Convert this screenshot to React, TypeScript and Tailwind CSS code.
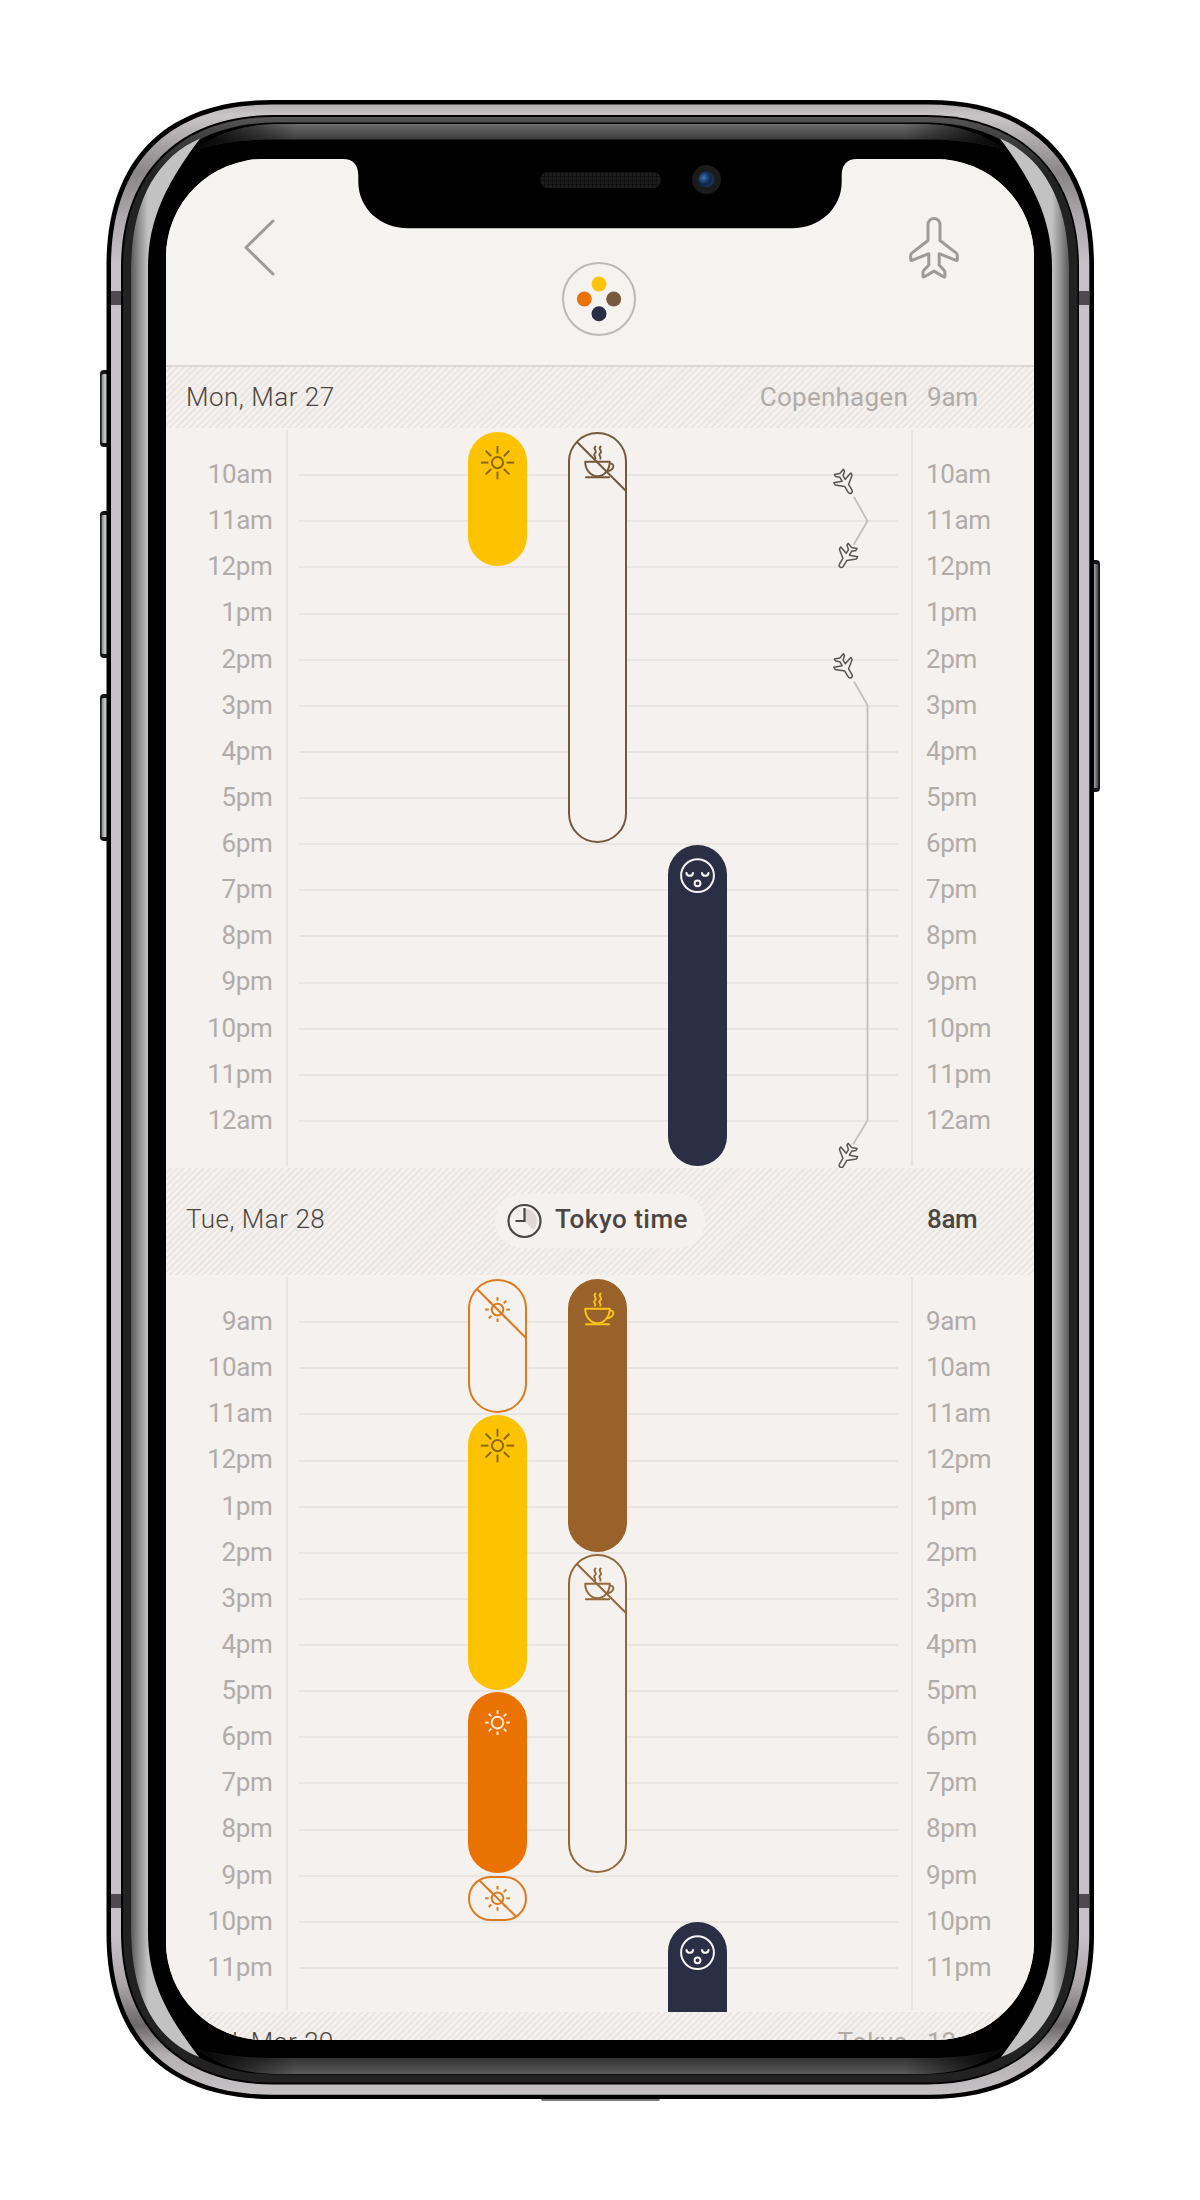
import React from "react";

const PLANE =
  "M-6 7 A6 6 0 0 1 6 7 V23 L22.3 35.6 Q23.3 36.4 23.3 38 V42 Q23.3 43.4 22 42.8 L5.2 36.2 V47.5 L9.6 52.2 Q11 53.5 11 56 V58.3 Q11 60 9.6 59.2 L0 53.6 L-9.6 59.2 Q-11 60 -11 58.3 V56 Q-11 53.5 -9.6 52.2 L-5.2 47.5 V36.2 L-22 42.8 Q-23.3 43.4 -23.3 42 V38 Q-23.3 36.4 -22.3 35.6 L-6 23 Z";

const SMALL_PLANE =
  "M-2.2 -9.6 Q-2.2 -12.4 0 -12.4 Q2.2 -12.4 2.2 -9.6 V-3.4 L9.8 2.8 V5.4 L1.8 2.6 V7 L5.2 10 V12.2 L0 10.4 L-5.2 12.2 V10 L-1.8 7 V2.6 L-9.8 5.4 V2.8 L-2.2 -3.4 Z";

function squircle(l: number, t: number, r: number, b: number, R: number, c: number) {
  const k = R * (1 - c);
  return `M${l} ${t + R}C${l} ${t + k} ${l + k} ${t} ${l + R} ${t}H${r - R}C${r - k} ${t} ${r} ${t + k} ${r} ${t + R}V${b - R}C${r} ${b - k} ${r - k} ${b} ${r - R} ${b}H${l + R}C${l + k} ${b} ${l} ${b - k} ${l} ${b - R}Z`;
}

function SideButton({ x, y, h }: { x: number; y: number; h: number }) {
  return (
    <g>
      <rect x={x} y={y} width="14" height={h} rx="4" fill="#151617" />
      <rect x={x + 1.5} y={y + 4} width="11" height={h - 8} rx="1.5" fill="url(#btn)" />
    </g>
  );
}

function DeviceFrame() {
  const side =
    "M131 270C131 205 155 158 200 138.5C166 184 148 220 148 268V1932C148 1980 166 2014 199 2057C155 2040 131 1995 131 1928Z";
  const topGloss =
    "M193 150C222 132 245 124 280 124H920C955 124 978 132 1007 150C978 142 955 139.5 925 139.5H275C245 139.5 222 142 193 150Z";
  const bottomGloss =
    "M199 2050C225 2056 245 2058 275 2058H925C955 2058 975 2056 1001 2050C978 2068 950 2074 920 2074H280C250 2074 222 2068 199 2050Z";
  return (
    <svg className="absolute left-0 top-0" width="1200" height="2200" viewBox="0 0 1200 2200" fill="none">
      <defs>
        <linearGradient id="btn" x1="0" x2="1" y1="0" y2="0">
          <stop offset="0" stopColor="#77797a" />
          <stop offset=".3" stopColor="#c9cbcb" />
          <stop offset=".6" stopColor="#a5a6a7" />
          <stop offset="1" stopColor="#3a3a3b" />
        </linearGradient>
        <linearGradient id="steel" x1="0" x2="0" y1="104" y2="2095" gradientUnits="userSpaceOnUse">
          <stop offset="0" stopColor="#b5b0b2" />
          <stop offset=".006" stopColor="#cac6c8" />
          <stop offset=".02" stopColor="#a9a5a7" />
          <stop offset=".035" stopColor="#8a8687" />
          <stop offset=".055" stopColor="#aaa6a9" />
          <stop offset=".08" stopColor="#c6c1c8" />
          <stop offset=".92" stopColor="#c6c1c8" />
          <stop offset=".945" stopColor="#aaa4a6" />
          <stop offset=".965" stopColor="#6c6869" />
          <stop offset=".98" stopColor="#b5b1b2" />
          <stop offset="1" stopColor="#c6c2c5" />
        </linearGradient>
        <linearGradient id="rim" x1="0" x2="0" y1="117" y2="175" gradientUnits="userSpaceOnUse">
          <stop offset="0" stopColor="#565656" />
          <stop offset=".25" stopColor="#454545" />
          <stop offset="1" stopColor="#222222" />
        </linearGradient>
        <linearGradient id="sideL" x1="131" x2="148" y1="0" y2="0" gradientUnits="userSpaceOnUse">
          <stop offset="0" stopColor="#5a5a5a" />
          <stop offset=".5" stopColor="#929292" />
          <stop offset="1" stopColor="#c2c2c2" />
        </linearGradient>
        <linearGradient id="topGloss" x1="0" x2="0" y1="124" y2="140" gradientUnits="userSpaceOnUse">
          <stop offset="0" stopColor="#6c6c6c" />
          <stop offset="1" stopColor="#3a3a3a" />
        </linearGradient>
        <linearGradient id="bottomGloss" x1="0" x2="0" y1="2058" y2="2074" gradientUnits="userSpaceOnUse">
          <stop offset="0" stopColor="#343434" />
          <stop offset="1" stopColor="#5a5a5a" />
        </linearGradient>
        <linearGradient id="fade" x1="190" x2="1010" y1="0" y2="0" gradientUnits="userSpaceOnUse">
          <stop offset="0" stopColor="#000" />
          <stop offset=".13" stopColor="#000" stopOpacity="0" />
          <stop offset=".87" stopColor="#000" stopOpacity="0" />
          <stop offset="1" stopColor="#000" />
        </linearGradient>
      </defs>
      <SideButton x={100} y={370} h={77} />
      <SideButton x={100} y={511} h={147} />
      <SideButton x={100} y={694} h={147} />
      <SideButton x={1086} y={560} h={232} />
      <rect x="541" y="2096" width="119" height="5" rx="2" fill="#77797a" />
      <path d={squircle(106.5, 100, 1094, 2099, 165, 0.64)} fill="#000" />
      <path d={squircle(111, 104.5, 1089.3, 2094.7, 161, 0.64)} fill="url(#steel)" />
      <g fill="#4f4a4d">
        <rect x="111" y="291" width="11" height="14" />
        <rect x="1079" y="291" width="10.3" height="14" />
        <rect x="111" y="1894" width="11" height="14" />
        <rect x="1079" y="1894" width="10.3" height="14" />
      </g>
      <path d={squircle(121, 115, 1079, 2084.5, 152, 0.62)} fill="#000" />
      <path d={squircle(123, 117, 1077.5, 2082.5, 150, 0.62)} fill="url(#rim)" />
      <path d={squircle(131, 122.5, 1069, 2074.5, 145, 0.62)} fill="#000" />
      <path d={topGloss} fill="url(#topGloss)" />
      <path d={bottomGloss} fill="url(#bottomGloss)" />
      <path d={topGloss} fill="url(#fade)" />
      <path d={bottomGloss} fill="url(#fade)" />
      <path d={side} fill="url(#sideL)" />
      <path d={side} fill="url(#sideL)" transform="matrix(-1 0 0 1 1200 0)" />
    </svg>
  );
}

function Notch() {
  return (
    <svg className="absolute left-[177px] top-[-1px]" width="514" height="71" viewBox="343 158 514 71">
      <defs>
        <pattern id="mesh" width="4" height="4" patternUnits="userSpaceOnUse">
          <rect width="4" height="4" fill="#1d1b1c" />
          <path d="M0 0H4M0 0V4" stroke="#0d0c0d" strokeWidth="1.4" />
        </pattern>
        <radialGradient id="lens" cx=".35" cy=".4" r=".7">
          <stop offset="0" stopColor="#3f75b5" />
          <stop offset=".3" stopColor="#214a80" />
          <stop offset=".6" stopColor="#12264a" />
          <stop offset="1" stopColor="#1c3a66" />
        </radialGradient>
      </defs>
      <path d="M343 158V159C353.500 159 358.300 165 358.300 176V182C358.300 208 380 228.300 408 228.300H792C820 228.300 841.700 208 841.700 182V176C841.700 165 846.500 159 857 159V158Z" fill="#000" />
      <rect x="540" y="172" width="121" height="16" rx="8" fill="url(#mesh)" />
      <circle cx="706.500" cy="179.500" r="14.500" fill="#1b1b1c" />
      <circle cx="706.300" cy="179.300" r="8" fill="url(#lens)" />
    </svg>
  );
}

function Sun({ big }: { big?: boolean }) {
  const [a, b] = big ? [9, 16.7] : [8.8, 12.4];
  return (
    <g strokeWidth="2">
      <circle r={big ? 5.6 : 5.8} />
      {[0, 45, 90, 135, 180, 225, 270, 315].map((d) => (
        <path key={d} d={`M0 ${-a}V${-b}`} transform={`rotate(${d})`} />
      ))}
    </g>
  );
}

function Cup() {
  return (
    <g strokeWidth="1.9" strokeLinejoin="round" strokeLinecap="round">
      <path d="M-12.300 -.8H12.300C12.300 7 7 13.500 0 13.500S-12.300 7 -12.300 -.8Z" />
      <path d="M-11.600 14.600H11.600" />
      <path d="M12.300 1H13.500C17.500 1.500 16.500 8 9.500 8.500" />
      <path d="M-2 -16C-5.500 -13.500 .4 -12 -2.400 -9.500S-.8 -6 -2.400 -3.800" />
      <path d="M3.200 -16C-.3 -13.500 5.600 -12 2.800 -9.500S4.400 -6 2.800 -3.800" />
    </g>
  );
}

function Face() {
  return (
    <g strokeWidth="2" strokeLinecap="round">
      <circle r="16.400" />
      <path d="M-11 -2.600C-10.500 1.200 -5 1.200 -4.500 -2.600M4.500 -2.600C5 1.200 10.500 1.200 11 -2.600" />
      <circle cy="7.700" r="2.900" />
    </g>
  );
}

type Bar = {
  place: string;
  icon: "sun" | "sunSmall" | "cup" | "face";
  stroke: string;
  cy?: number;
  slash?: string;
};

const SLASH = "M9 10L57.500 58.500";

const mondayBars: Bar[] = [
  { place: "left-[180px] top-[4px] h-[134px] bg-[#fdc300] rounded-full", icon: "sun", stroke: "#8a6a10" },
  { place: "left-[280px] top-[4px] h-[411px] bg-[#f5f1ee] border-2 border-[#75583b] rounded-full", icon: "cup", stroke: "#75583b", slash: SLASH },
  { place: "left-[380px] top-[417px] h-[320.500px] bg-[#2a2f45] rounded-full", icon: "face", stroke: "#f8f4f4" },
];

const tuesdayBars: Bar[] = [
  { place: "left-[180px] top-[4px] h-[134px] bg-[#f5f1ee] border-2 border-[#dd7a1e] rounded-full", icon: "sunSmall", stroke: "#dd7a1e", slash: SLASH },
  { place: "left-[180px] top-[140px] h-[275px] bg-[#fdc300] rounded-full", icon: "sun", stroke: "#8a6a10" },
  { place: "left-[180px] top-[417px] h-[181px] bg-[#ea7200] rounded-full", icon: "sunSmall", stroke: "#fbe9d6" },
  { place: "left-[180px] top-[601px] h-[44.500px] bg-[#f5f1ee] border-2 border-[#dd7a1e] rounded-full", icon: "sunSmall", stroke: "#dd7a1e", cy: 22.3, slash: "M11 4L48 40.500" },
  { place: "left-[280px] top-[4px] h-[272.500px] bg-[#98622a] rounded-full", icon: "cup", stroke: "#fcc419" },
  { place: "left-[280px] top-[278.500px] h-[319px] bg-[#f5f1ee] border-2 border-[#91683a] rounded-full", icon: "cup", stroke: "#91683a", slash: SLASH },
  { place: "left-[380px] top-[647px] h-[90px] bg-[#2a2f45] rounded-t-full", icon: "face", stroke: "#f8f4f4" },
];

function BarView({ bar }: { bar: Bar }) {
  const bordered = bar.place.includes("border-2");
  return (
    <div className={"absolute w-[59px] " + bar.place}>
      <svg
        className={bordered ? "absolute -left-0.5 -top-0.5" : "absolute left-0 top-0"}
        width="59"
        height="62"
        viewBox="0 0 59 62"
        fill="none"
        stroke={bar.stroke}
      >
        <g transform={`translate(29.500 ${bar.cy ?? 30.6})`}>
          {bar.icon === "cup" ? <Cup /> : bar.icon === "face" ? <Face /> : <Sun big={bar.icon === "sun"} />}
        </g>
        {bar.slash && <path d={bar.slash} strokeWidth="2" />}
      </svg>
    </div>
  );
}

function HourLabels({ hours, right }: { hours: string[]; right?: boolean }) {
  return (
    <div
      className={
        right
          ? "w-[120px] shrink-0 pl-[13px] pt-[23px] tracking-[-.35px]"
          : "w-[120px] shrink-0 pr-[13.500px] pt-[23px] text-right tracking-[-.35px]"
      }
    >
      {hours.map((h, i) => (
        <div key={i} className="h-[46.125px] whitespace-nowrap leading-[46px] text-[#b1acaa]">
          {h}
        </div>
      ))}
    </div>
  );
}

function DaySection({ hours, bars, className, children }: { hours: string[]; bars: Bar[]; className: string; children?: React.ReactNode }) {
  return (
    <div className={"relative flex shrink-0 overflow-hidden bg-[#f5f1ee] " + className}>
      <HourLabels hours={hours} />
      <div className="relative my-0.5 w-[627px] shrink-0 border-x-2 border-[#e9e4e1]">
        <div className="ml-[11px] mr-[13px]">
          {hours.map((_, i) => (
            <div key={i} className="h-[46.125px] border-b-2 border-[#eae5e2]" />
          ))}
        </div>
        <div className="absolute -inset-y-0.5 left-0 right-0">
          {bars.map((b, i) => (
            <BarView key={i} bar={b} />
          ))}
          {children}
        </div>
      </div>
      <HourLabels hours={hours} right />
    </div>
  );
}

/* Flight legs, drawn in the coordinates of the first day's grid. */
function Flights() {
  const planes: [number, number, number][] = [
    [557, 54.5, 150],
    [558.5, 128.5, 210],
    [557, 239, 150],
    [558.5, 728.5, 210],
  ];
  return (
    <svg className="absolute left-0 top-0" width="620" height="740" viewBox="0 0 620 740" fill="none">
      <g stroke="#c4bfbc" strokeWidth="1.8">
        <path d="M566 69L579.500 93L565.500 117" />
        <path d="M566 253.500L579.500 277V692.500L565 716.500" />
      </g>
      {planes.map(([x, y, a], i) => (
        <path key={i} d={SMALL_PLANE} transform={`translate(${x} ${y}) rotate(${a})`} fill="#f5f1ee" stroke="#5a5552" strokeWidth="1.5" strokeLinejoin="round" />
      ))}
    </svg>
  );
}

const HATCH =
  "bg-[repeating-linear-gradient(135deg,#f5f1ee_0px,#f5f1ee_2.300px,#eae5e2_2.800px,#eae5e2_4.200px,#f5f1ee_4.670px)]";

function Band({ date, city, time, strong, className, children }: { date: string; city?: string; time: string; strong?: boolean; className: string; children?: React.ReactNode }) {
  return (
    <div className={"relative flex shrink-0 justify-between " + HATCH + " " + className}>
      <span className="w-[200px] pl-[20px] font-light tracking-[.5px] text-[#4b4643]">{date}</span>
      {children}
      <div className="flex">
        <span className="mr-[19px] tracking-[.25px] text-[#b1acaa]">{city}</span>
        <span className={strong ? "w-[107px] font-medium tracking-[-.35px] text-[#4b4643]" : "w-[107px] tracking-[-.2px] text-[#b1acaa]"}>{time}</span>
      </div>
    </div>
  );
}

export default function App() {
  const monday = ["10am", "11am", "12pm", "1pm", "2pm", "3pm", "4pm", "5pm", "6pm", "7pm", "8pm", "9pm", "10pm", "11pm", "12am"];
  const tuesday = ["9am", "10am", "11am", "12pm", "1pm", "2pm", "3pm", "4pm", "5pm", "6pm", "7pm", "8pm", "9pm", "10pm", "11pm"];
  return (
    <div className="relative h-[2200px] w-[1200px] overflow-hidden bg-white pt-[159px] font-['Roboto',sans-serif] text-[26px]">
      <DeviceFrame />
      <main className="relative mx-auto flex h-[1881px] w-[868px] flex-col overflow-hidden rounded-[98px] bg-[#f5f1ee]">
        <header className="relative flex h-[207.500px] shrink-0 items-start justify-between border-b-2 border-[#dcd7d4] bg-[#f5f3ef] pl-[75px] pr-[73px]">
          <Notch />
          <svg className="mt-[57px]" width="36" height="64" viewBox="0 0 36 64" fill="none" stroke="#9d9b98" strokeWidth="3" strokeLinecap="round" strokeLinejoin="round">
            <path d="M32 5L5 31.500L32 58" />
          </svg>
          <div className="ml-[14px] mt-[102.500px] flex size-[74px] items-center justify-center rounded-full border-2 border-[#bcb9b6]">
            <svg width="50" height="50" viewBox="-25 -25 50 50">
              <circle cy="-15" r="7.500" fill="#fdc20a" />
              <circle cx="-14.700" r="7.500" fill="#e9720c" />
              <circle cx="14.700" r="7.500" fill="#775a3c" />
              <circle cy="14.700" r="7.500" fill="#2a2f45" />
            </svg>
          </div>
          <svg className="mt-[54px]" width="54" height="66" viewBox="-27 -2 54 66" fill="none" stroke="#9d9b98" strokeWidth="3" strokeLinejoin="round">
            <path d={PLANE} transform="translate(0 2.500)" />
          </svg>
        </header>

        <Band date="Mon, Mar 27" city="Copenhagen" time="9am" className="h-[61.500px] leading-[60px]" />
        <DaySection hours={monday} bars={mondayBars} className="h-[740px]">
          <Flights />
        </DaySection>

        <Band date="Tue, Mar 28" time="8am" strong className="h-[107px] leading-[102px]">
          <div className="absolute left-[329px] top-[26px] flex h-[54px] w-[210px] items-center rounded-full bg-[#f5f1ee] pl-3 leading-none">
            <svg width="35" height="36" viewBox="-17.500 -18 35 36" fill="none" stroke="#4b4643" strokeWidth="2.200">
              <path d="M0 0V-12.500A12.500 12.500 0 0 1 8.800 8.800Z" fill="#dfd8d5" stroke="none" />
              <circle r="16" />
              <path d="M0 -13V0H-9" />
            </svg>
            <span className="mb-[4px] ml-[13px] whitespace-nowrap font-medium tracking-[.5px] text-[#4b4643]">Tokyo time</span>
          </div>
        </Band>
        <DaySection hours={tuesday} bars={tuesdayBars} className="h-[737px]" />

        <Band date="Wed, Mar 29" city="Tokyo" time="12am" className="h-[61.500px] leading-[60px]" />
      </main>
    </div>
  );
}
